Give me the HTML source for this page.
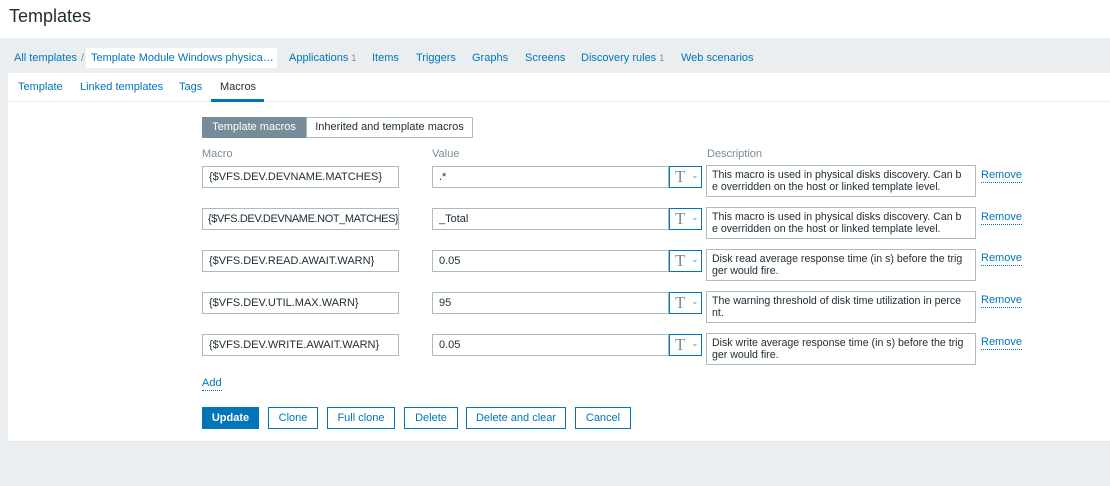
<!DOCTYPE html>
<html><head><style>
*{box-sizing:border-box;margin:0;padding:0}
body{width:1110px;height:486px;background:#ebeef0;font-family:"Liberation Sans",Arial,sans-serif;font-size:11px;color:#1f2c33;position:relative;overflow:hidden}
.a{position:absolute;white-space:nowrap}
.l{color:#0275b8}
.inp{position:absolute;height:22px;border:1px solid #acbbc2;background:#fff;padding:4px 6px;white-space:nowrap;overflow:hidden;line-height:13px}
.ta{position:absolute;height:32px;width:270px;border:1px solid #acbbc2;background:#fff;padding:3px 5px;line-height:12px;font-size:10.6px;overflow:hidden}
.tb{position:absolute;width:33px;height:22px;border:1px solid #0275b8;background:#fff;color:#768d99}
.rm{position:absolute;color:#0275b8;border-bottom:1px dotted #0275b8;line-height:13px}
.btn{position:absolute;top:407px;height:22px;border:1px solid #0275b8;background:#fff;color:#0275b8;text-align:center;line-height:20px;white-space:nowrap}
</style></head><body>
<div class="a" style="left:0;top:0;width:1110px;height:38px;background:#fff"></div>
<div class="a" style="left:9px;top:6px;font-size:18px;color:#1f2c33">Templates</div>
<div class="a l" style="left:14px;top:52px">All templates</div>
<div class="a" style="left:81px;top:52px;color:#768d99">/</div>
<div class="a" style="left:86px;top:48px;width:191px;height:20px;background:#fff;padding:4px 5px;color:#0275b8;overflow:hidden">Template Module Windows physica…</div>
<div class="a l" style="left:289px;top:52px">Applications <span style="color:#768d99;font-size:9px">1</span></div>
<div class="a l" style="left:372px;top:52px">Items</div>
<div class="a l" style="left:416px;top:52px">Triggers</div>
<div class="a l" style="left:472px;top:52px">Graphs</div>
<div class="a l" style="left:525px;top:52px">Screens</div>
<div class="a l" style="left:581px;top:52px">Discovery rules <span style="color:#768d99;font-size:9px">1</span></div>
<div class="a l" style="left:681px;top:52px">Web scenarios</div>
<div class="a" style="left:8px;top:73px;width:1102px;height:369px;background:#fff;border-bottom:1px solid #dfe4e7"></div>
<div class="a" style="left:8px;top:101px;width:1102px;height:1px;background:#ebeef0"></div>
<div class="a l" style="left:18px;top:81px">Template</div>
<div class="a l" style="left:80px;top:81px">Linked templates</div>
<div class="a l" style="left:179px;top:81px">Tags</div>
<div class="a" style="left:220px;top:81px">Macros</div>
<div class="a" style="left:211px;top:99px;width:53px;height:3px;background:#0275b8"></div>
<div class="a" style="left:202px;top:117px;width:104px;height:21px;background:#768d99;color:#fff;text-align:center;line-height:21px">Template macros</div>
<div class="a" style="left:306px;top:117px;width:167px;height:21px;border:1px solid #acbbc2;text-align:center;line-height:19px">Inherited and template macros</div>
<div class="a" style="left:202px;top:148px;color:#768d99">Macro</div>
<div class="a" style="left:432px;top:148px;color:#768d99">Value</div>
<div class="a" style="left:707px;top:148px;color:#768d99">Description</div>

<div class="inp" style="left:202px;top:166px;width:197px">{$VFS.DEV.DEVNAME.MATCHES}</div>
<div class="inp" style="left:432px;top:166px;width:237px">.*</div>
<div class="tb" style="left:669px;top:166px"><span style="position:absolute;left:5px;top:0;font-family:'Liberation Serif';font-size:17px">T</span><span style="position:absolute;left:21px;top:3px;font-size:9px">⌄</span></div>
<div class="ta" style="left:706px;top:165px">This macro is used in physical disks discovery. Can b e overridden on the host or linked template level.</div>
<div class="rm" style="left:981px;top:169px">Remove</div>

<div class="inp" style="left:202px;top:208px;width:197px;letter-spacing:-0.4px;padding-left:5px">{$VFS.DEV.DEVNAME.NOT_MATCHES}</div>
<div class="inp" style="left:432px;top:208px;width:237px">_Total</div>
<div class="tb" style="left:669px;top:208px"><span style="position:absolute;left:5px;top:0;font-family:'Liberation Serif';font-size:17px">T</span><span style="position:absolute;left:21px;top:3px;font-size:9px">⌄</span></div>
<div class="ta" style="left:706px;top:207px">This macro is used in physical disks discovery. Can b e overridden on the host or linked template level.</div>
<div class="rm" style="left:981px;top:211px">Remove</div>

<div class="inp" style="left:202px;top:250px;width:197px">{$VFS.DEV.READ.AWAIT.WARN}</div>
<div class="inp" style="left:432px;top:250px;width:237px">0.05</div>
<div class="tb" style="left:669px;top:250px"><span style="position:absolute;left:5px;top:0;font-family:'Liberation Serif';font-size:17px">T</span><span style="position:absolute;left:21px;top:3px;font-size:9px">⌄</span></div>
<div class="ta" style="left:706px;top:249px">Disk read average response time (in s) before the trig ger would fire.</div>
<div class="rm" style="left:981px;top:252px">Remove</div>

<div class="inp" style="left:202px;top:292px;width:197px">{$VFS.DEV.UTIL.MAX.WARN}</div>
<div class="inp" style="left:432px;top:292px;width:237px">95</div>
<div class="tb" style="left:669px;top:292px"><span style="position:absolute;left:5px;top:0;font-family:'Liberation Serif';font-size:17px">T</span><span style="position:absolute;left:21px;top:3px;font-size:9px">⌄</span></div>
<div class="ta" style="left:706px;top:291px">The warning threshold of disk time utilization in perce nt.</div>
<div class="rm" style="left:981px;top:294px">Remove</div>

<div class="inp" style="left:202px;top:334px;width:197px">{$VFS.DEV.WRITE.AWAIT.WARN}</div>
<div class="inp" style="left:432px;top:334px;width:237px">0.05</div>
<div class="tb" style="left:669px;top:334px"><span style="position:absolute;left:5px;top:0;font-family:'Liberation Serif';font-size:17px">T</span><span style="position:absolute;left:21px;top:3px;font-size:9px">⌄</span></div>
<div class="ta" style="left:706px;top:333px">Disk write average response time (in s) before the trig ger would fire.</div>
<div class="rm" style="left:981px;top:336px">Remove</div>

<div class="rm" style="left:202px;top:377px">Add</div>
<div class="btn" style="left:202px;width:57px;background:#0275b8;color:#fff;font-weight:bold">Update</div>
<div class="btn" style="left:268px;width:50px">Clone</div>
<div class="btn" style="left:327px;width:68px">Full clone</div>
<div class="btn" style="left:404px;width:54px">Delete</div>
<div class="btn" style="left:466px;width:100px">Delete and clear</div>
<div class="btn" style="left:575px;width:56px">Cancel</div>
</body></html>
